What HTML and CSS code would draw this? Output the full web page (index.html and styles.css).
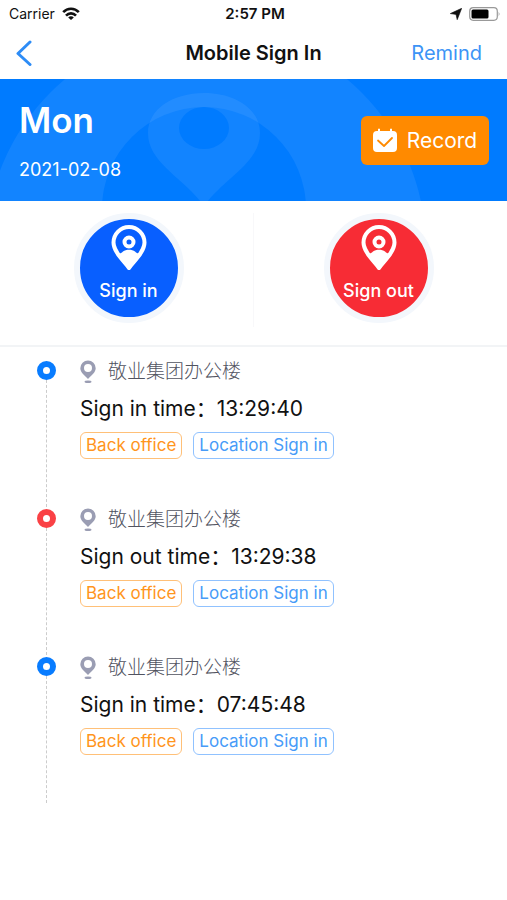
FILE: index.html
```html
<!DOCTYPE html>
<html lang="en">

<head>
    <meta charset="UTF-8">
    <meta name="viewport" content="width=device-width, initial-scale=1.0">
    <title>Mobile Sign In</title>
    <link rel="stylesheet" href="styles.css">
</head>

<body>

    <!-- shared icons -->
    <svg class="sprite" aria-hidden="true">
        <symbol id="pin-person" viewBox="0 0 36 46">
            <path fill="none" stroke="currentColor" stroke-width="4" stroke-linejoin="round" d="M18 43 C13 36 2.500 27 2.500 17.500 A15.500 15.500 0 0 1 33.500 17.500 C33.500 27 23 36 18 43 Z" />
            <circle cx="18" cy="17" r="4.500" fill="none" stroke="currentColor" stroke-width="4" />
            <path fill="currentColor" d="M5 29 C8 28 10 29 12 26.500 C15 24 21 24 24 26.500 C26 29 28 28 31 29 L18 45 Z" />
        </symbol>
        <symbol id="pin" viewBox="0 0 16 24">
            <path fill="currentColor" fill-rule="evenodd" d="M8 0.500 A7.700 7.700 0 0 1 15.700 8.200 C15.700 12.500 11 15.500 8 19 C5 15.500 0.300 12.500 0.300 8.200 A7.700 7.700 0 0 1 8 0.500 Z M8 4 A4 4 0 1 0 8 12 A4 4 0 1 0 8 4 Z" />
            <ellipse cx="8" cy="21.800" rx="3.500" ry="1.300" fill="currentColor" />
        </symbol>
    </svg>

    <header>
        <div class="status">
            <div class="carrier">
                <span>Carrier</span>
                <svg width="18" height="14" viewBox="0 0 18 14" fill="none" stroke="#111" stroke-width="2.600">
                    <path d="M1.200 5.200 C5.500 0.600 12.500 0.600 16.800 5.200" />
                    <path d="M4 8.600 C6.800 5.600 11.200 5.600 14 8.600" />
                    <path d="M9 13 L6.200 10.400 C7.800 8.900 10.200 8.900 11.800 10.400 Z" fill="#111" stroke="none" />
                </svg>
            </div>
            <strong>2:57 PM</strong>
            <div class="battery">
                <svg width="12" height="12" viewBox="0 0 12 12">
                    <path d="M11.700 0.300 L7.200 11.700 L6 6.400 L0.300 5.600 Z" fill="#111" stroke="#111" stroke-width="0.600" stroke-linejoin="round" />
                </svg>
                <svg width="32" height="14" viewBox="0 0 32 14">
                    <rect x="0.700" y="0.700" width="27.600" height="12.600" rx="3.500" fill="#fff" stroke="#999" stroke-width="1.200" />
                    <rect x="2.500" y="2.500" width="17" height="9" rx="1.500" fill="#000" />
                    <path d="M29.700 4.700 Q31.500 7 29.700 9.300 Z" fill="#999" />
                </svg>
            </div>
        </div>

        <nav class="navbar">
            <a class="back" href="#" aria-label="Back">
                <svg width="16" height="26" viewBox="0 0 16 26" fill="none" stroke="#2d8cf6" stroke-width="3" stroke-linecap="round" stroke-linejoin="round">
                    <path d="M14 2 L2 13.500 L14 24.500" />
                </svg>
            </a>
            <h1>Mobile Sign In</h1>
            <a class="remind" href="#">Remind</a>
        </nav>
    </header>

    <main>
        <section class="banner">
            <svg class="banner-art" viewBox="0 0 507 122" preserveAspectRatio="xMinYMin slice" fill="#fff" fill-opacity="0.07" aria-hidden="true">
                <path fill-rule="evenodd" d="M-14 169 A220 220 0 1 1 426 169 A220 220 0 1 1 -14 169 Z M102 130 A102 102 0 1 0 306 130 A102 102 0 1 0 102 130 Z" />
                <path fill-rule="evenodd" d="M204 14 C235 14 260 30 260 54 C260 84 225 98 204 127 C183 98 148 84 148 54 C148 30 173 14 204 14 Z M204 28 A25 21 0 1 0 204 70 A25 21 0 1 0 204 28 Z" />
            </svg>
            <div class="today">
                <h2>Mon</h2>
                <time datetime="2021-02-08">2021-02-08</time>
            </div>
            <button class="record" type="button">
                <svg width="24" height="24" viewBox="0 0 24 24">
                    <path fill="#fff" d="M4 3 H5 V1 Q6 0 7 1 V3 H17 V1 Q18 0 19 1 V3 H20 Q24 3 24 7 V20 Q24 24 20 24 H4 Q0 24 0 20 V7 Q0 3 4 3 Z" />
                    <path fill="none" stroke="#ff8a00" stroke-width="1.800" stroke-linecap="round" stroke-linejoin="round" d="M5 12.500 L11 18 L19 10" />
                </svg>
                Record
            </button>
        </section>

        <section class="actions">
            <div class="action">
                <button class="sign sign-in" type="button">
                    <svg width="36" height="46"><use href="#pin-person" /></svg>
                    Sign in
                </button>
            </div>
            <div class="action">
                <button class="sign sign-out" type="button">
                    <svg width="36" height="46"><use href="#pin-person" /></svg>
                    Sign out
                </button>
            </div>
        </section>

        <ol class="timeline">
            <li class="entry">
                <div class="rail"><span class="dot"></span></div>
                <div class="info">
                    <div class="place">
                        <svg width="16" height="24"><use href="#pin" /></svg>
                        <span lang="zh">敬业集团办公楼</span>
                    </div>
                    <p>Sign in time：13:29:40</p>
                    <div class="tags">
                        <span class="tag office">Back office</span>
                        <span class="tag location">Location Sign in</span>
                    </div>
                </div>
            </li>
            <li class="entry">
                <div class="rail"><span class="dot out"></span></div>
                <div class="info">
                    <div class="place">
                        <svg width="16" height="24"><use href="#pin" /></svg>
                        <span lang="zh">敬业集团办公楼</span>
                    </div>
                    <p>Sign out time：13:29:38</p>
                    <div class="tags">
                        <span class="tag office">Back office</span>
                        <span class="tag location">Location Sign in</span>
                    </div>
                </div>
            </li>
            <li class="entry">
                <div class="rail"><span class="dot"></span></div>
                <div class="info">
                    <div class="place">
                        <svg width="16" height="24"><use href="#pin" /></svg>
                        <span lang="zh">敬业集团办公楼</span>
                    </div>
                    <p>Sign in time：07:45:48</p>
                    <div class="tags">
                        <span class="tag office">Back office</span>
                        <span class="tag location">Location Sign in</span>
                    </div>
                </div>
            </li>
        </ol>
    </main>

</body>

</html>
```

FILE: styles.css
```css
* {
    box-sizing: border-box;
}

body {
    margin: 0;
    background: #fff;
    color: #111;
    font-family: Inter, "Noto Sans CJK SC", sans-serif;
}

h1, h2, p, ol {
    margin: 0;
    padding: 0;
}

svg {
    display: block;
    flex-shrink: 0;
}

a {
    color: #3d94f6;
    text-decoration: none;
}

button {
    border: 0;
    padding: 0;
    color: #fff;
    font-family: inherit;
    cursor: pointer;
}

.sprite {
    display: none;
}

.status, .navbar {
    display: grid;
    grid-template-columns: 1fr auto 1fr;
    align-items: center;
}

.status {
    height: 27px;
    padding: 0 6px 0 9px;
    font-size: 14px;
}

.status strong {
    font-size: 15px;
    font-weight: 600;
}

.carrier, .battery {
    display: flex;
    align-items: center;
    gap: 7px;
}

.battery {
    justify-content: flex-end;
}

.navbar {
    height: 52px;
    padding: 0 16px;
    font-size: 20px;
}

.navbar h1 {
    font-size: 20px;
    font-weight: 600;
}

.back {
    justify-self: start;
}

.remind {
    justify-self: end;
    margin-right: 9px;
}

.banner {
    position: relative;
    display: flex;
    align-items: center;
    justify-content: space-between;
    height: 122px;
    padding: 0 18px 0 19px;
    background: #007bff;
    color: #fff;
}

.banner-art {
    position: absolute;
    top: 0;
    left: 0;
    width: 100%;
    height: 100%;
}

.today, .record {
    position: relative;
}

.today h2 {
    font-size: 35px;
    font-weight: 600;
    line-height: 44px;
}

.today time {
    display: block;
    margin-top: 16px;
    font-size: 18px;
    line-height: 24px;
}

.record {
    display: flex;
    align-items: center;
    justify-content: center;
    gap: 10px;
    width: 128px;
    height: 49px;
    border-radius: 6px;
    background: #ff8a00;
    font-size: 21px;
}

.actions {
    display: flex;
    padding: 12px 4px 18px;
    border-bottom: 2px solid #f2f4f6;
}

.action {
    flex: 1;
    display: flex;
    justify-content: center;
    height: 114px;
}

.action + .action {
    border-left: 1px solid #f8f8fa;
}

.sign {
    display: flex;
    flex-direction: column;
    align-items: center;
    gap: 8px;
    width: 110px;
    height: 110px;
    padding-top: 6px;
    border: 6px solid #f3f7fc;
    border-radius: 50%;
    font-size: 18px;
    font-weight: 500;
    line-height: 24px;
}

.sign-in {
    background: #085fff;
}

.sign-out {
    background: #f72c35;
}

.timeline {
    padding: 12px 20px 0 37px;
    list-style: none;
}

.entry {
    display: flex;
    gap: 24px;
    min-height: 148px;
}

.rail {
    display: flex;
    flex-direction: column;
    align-items: center;
    width: 19px;
    padding-top: 2px;
}

/* dashed line runs from the dot down to the next entry */
.rail::after {
    content: "";
    flex: 1;
    border-left: 1px dashed #ccc;
}

.dot {
    width: 19px;
    height: 19px;
    border: 6px solid #087cff;
    border-radius: 50%;
}

.dot.out {
    border-color: #fa4145;
}

.place {
    display: flex;
    align-items: center;
    gap: 12px;
    height: 26px;
    color: #9a9db3;
}

.place span {
    color: #51535f;
    font-size: 19px;
    font-weight: 300;
    line-height: 24px;
}

.info p {
    margin: 10px 0;
    font-size: 21px;
    line-height: 27px;
}

.tags {
    display: flex;
    gap: 11px;
}

.tag {
    padding: 0 5px;
    border: 1px solid;
    border-radius: 6px;
    font-size: 17px;
    line-height: 25px;
}

.office {
    border-color: #ffc078;
    color: #ff951c;
}

.location {
    border-color: #90c2ff;
    color: #479bf8;
}
```
